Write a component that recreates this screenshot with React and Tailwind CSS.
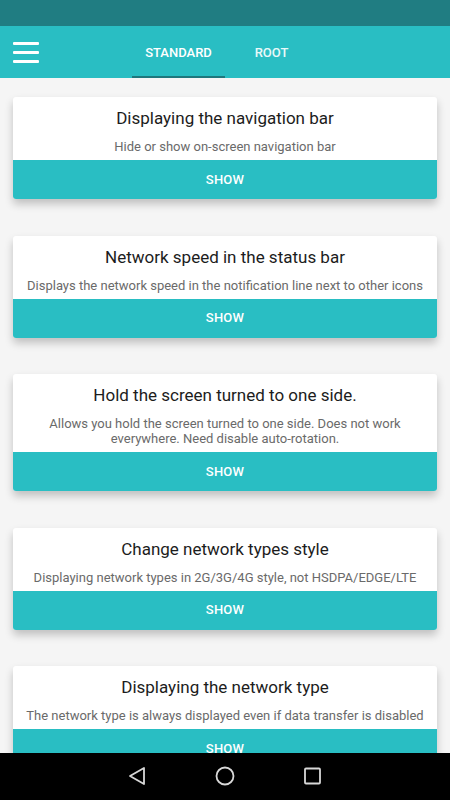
import React from "react";

const cards = [
  { title: "Displaying the navigation bar", desc: ["Hide or show on-screen navigation bar"] },
  { title: "Network speed in the status bar", desc: ["Displays the network speed in the notification line next to other icons"] },
  { title: "Hold the screen turned to one side.", desc: ["Allows you hold the screen turned to one side. Does not work", "everywhere. Need disable auto-rotation."] },
  { title: "Change network types style", desc: ["Displaying network types in 2G/3G/4G style, not HSDPA/EDGE/LTE"] },
  { title: "Displaying the network type", desc: ["The network type is always displayed even if data transfer is disabled"] },
];

function Card({ title, desc }) {
  return (
    <div className="mx-[13px] rounded-[3px] bg-white shadow-[0_5px_9px_rgba(0,0,0,0.22)] overflow-hidden shrink-0">
      <div className="pt-[11px] flex flex-col items-center text-center">
        <div className="text-[17px] leading-[20px] text-[#1c1c1c] whitespace-nowrap">{title}</div>
        <div className="mt-[11px] text-[13px] leading-[15px] text-[#6a6a6a] whitespace-nowrap">
          {desc.map((d, i) => (
            <div key={i}>{d}</div>
          ))}
        </div>
      </div>
      <div className="mt-[6px] h-[39px] bg-[#29bec3] flex items-center justify-center text-white text-[13px] font-medium tracking-[0.2px]">
        SHOW
      </div>
    </div>
  );
}

export default function App() {
  return (
    <div
      className="w-[450px] h-[800px] flex flex-col bg-[#f5f5f5] overflow-hidden"
      style={{ fontFamily: "Roboto, 'Noto Sans', sans-serif" }}
    >
      <div className="h-[26px] bg-[#207d82] shrink-0" />
      <div className="h-[52px] bg-[#29bec3] shrink-0 flex items-stretch relative">
        <div className="w-[52px] flex flex-col justify-center pl-[13px] gap-[6px]">
          <div className="w-[26px] h-[3px] bg-white rounded-[1px]" />
          <div className="w-[26px] h-[3px] bg-white rounded-[1px]" />
          <div className="w-[26px] h-[3px] bg-white rounded-[1px]" />
        </div>
        <div className="ml-[80px] flex items-stretch">
          <div className="w-[93px] flex items-center justify-center text-white text-[13px] font-medium border-b-[2px] border-[#1e777c] pt-[4px]">
            STANDARD
          </div>
          <div className="w-[93px] flex items-center justify-center text-white/90 text-[13px] font-medium pt-[2px]">
            ROOT
          </div>
        </div>
      </div>
      <div className="flex-1 overflow-hidden flex flex-col gap-[36.5px] pt-[19px]">
        {cards.map((c, i) => (
          <Card key={i} {...c} />
        ))}
      </div>
      <div className="h-[47px] bg-black shrink-0 flex items-center justify-center">
        <svg width="450" height="47" viewBox="0 0 450 47">
          <polygon points="144,15 144,31 130,23" fill="none" stroke="#d8d8d8" strokeWidth="1.8" strokeLinejoin="round" />
          <circle cx="225" cy="23" r="8.5" fill="none" stroke="#d8d8d8" strokeWidth="1.8" />
          <rect x="305" y="15.5" width="15" height="15" rx="1" fill="none" stroke="#d8d8d8" strokeWidth="1.8" />
        </svg>
      </div>
    </div>
  );
}
